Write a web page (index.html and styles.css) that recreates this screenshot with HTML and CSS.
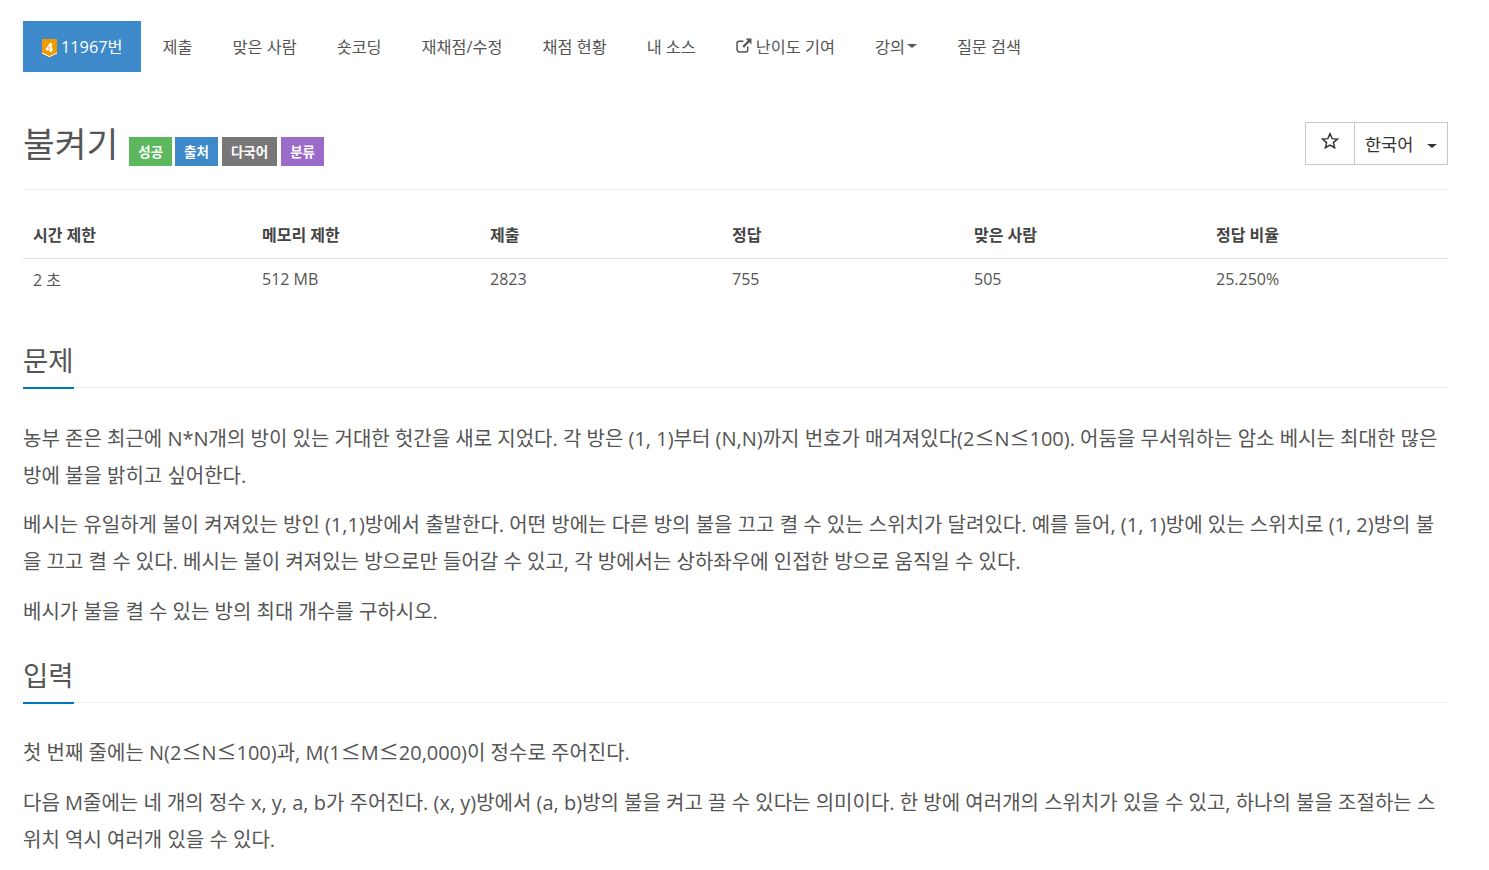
FILE: index.html
```html
<!DOCTYPE html>
<html lang="ko">
<head>
  <meta charset="UTF-8">
  <title>불켜기</title>
  <link rel="stylesheet" href="styles.css">
</head>
<body>

<div class="container">
  <ul class="tabs">
    <li class="active">
      <a href="#">
        <svg class="tier" width="15" height="20" viewBox="0 -1 15 20">
          <path d="M0 0h15v14.500l-7.500 4-7.500-4z" fill="#ec9a00"/>
          <path d="M0 14l7.500 3.500 7.500-3.500" fill="none" stroke="#fff" stroke-width="1"/>
          <text x="7.500" y="13" text-anchor="middle" class="tier-num">4</text>
        </svg>
        11967번
      </a>
    </li>
    <li><a href="#">제출</a></li>
    <li><a href="#">맞은 사람</a></li>
    <li><a href="#">숏코딩</a></li>
    <li><a href="#">재채점/수정</a></li>
    <li><a href="#">채점 현황</a></li>
    <li><a href="#">내 소스</a></li>
    <li>
      <a href="#">
        <svg class="ext" width="16" height="15" viewBox="0 0 15 14">
          <path d="M11 8v3a2 2 0 0 1-2 2H3a2 2 0 0 1-2-2V5a2 2 0 0 1 2-2h4" fill="none" stroke="#555" stroke-width="1.400"/>
          <path d="M9 0.500h5.500V6l-2-2-5 5-1.500-1.500 5-5z" fill="#555"/>
        </svg>
        난이도 기여
      </a>
    </li>
    <li><a href="#">강의<span class="caret"></span></a></li>
    <li><a href="#">질문 검색</a></li>
  </ul>

  <div class="page-header">
    <h1>불켜기</h1>
    <span class="label green">성공</span>
    <span class="label blue">출처</span>
    <span class="label gray">다국어</span>
    <span class="label purple">분류</span>
    <div class="btn-group">
      <button class="btn star">
        <svg width="18" height="18" viewBox="0 0 16 16">
          <path d="M8 1.500l1.900 4.400 4.700.4-3.600 3.100 1.100 4.600L8 11.600l-4.100 2.400 1.100-4.600L1.400 6.300l4.700-.4z" fill="none" stroke="#333" stroke-width="1.300"/>
        </svg>
      </button>
      <button class="btn lang">한국어<span class="caret dark"></span></button>
    </div>
  </div>

  <table class="info">
    <thead>
      <tr>
        <th class="col-time">시간 제한</th>
        <th class="col-mem">메모리 제한</th>
        <th class="col-sub">제출</th>
        <th class="col-sub">정답</th>
        <th class="col-sub">맞은 사람</th>
        <th>정답 비율</th>
      </tr>
    </thead>
    <tbody>
      <tr>
        <td>2 초</td>
        <td>512 MB</td>
        <td>2823</td>
        <td>755</td>
        <td>505</td>
        <td>25.250%</td>
      </tr>
    </tbody>
  </table>

  <section>
    <div class="headline"><h2>문제</h2></div>
    <p>농부 존은 최근에 N*N개의 방이 있는 거대한 헛간을 새로 지었다. 각 방은 (1, 1)부터 (N,N)까지 번호가 매겨져있다(2<span class="le">≤</span>N<span class="le">≤</span>100). 어둠을 무서워하는 암소 베시는 최대한 많은 방에 불을 밝히고 싶어한다.</p>
    <p>베시는 유일하게 불이 켜져있는 방인 (1,1)방에서 출발한다. 어떤 방에는 다른 방의 불을 끄고 켤 수 있는 스위치가 달려있다. 예를 들어, (1, 1)방에 있는 스위치로 (1, 2)방의 불을 끄고 켤 수 있다. 베시는 불이 켜져있는 방으로만 들어갈 수 있고, 각 방에서는 상하좌우에 인접한 방으로 움직일 수 있다.</p>
    <p>베시가 불을 켤 수 있는 방의 최대 개수를 구하시오.</p>
  </section>

  <section>
    <div class="headline"><h2>입력</h2></div>
    <p>첫 번째 줄에는 N(2<span class="le">≤</span>N<span class="le">≤</span>100)과, M(1<span class="le">≤</span>M<span class="le">≤</span>20,000)이 정수로 주어진다.</p>
    <p>다음 M줄에는 네 개의 정수 x, y, a, b가 주어진다. (x, y)방에서 (a, b)방의 불을 켜고 끌 수 있다는 의미이다. 한 방에 여러개의 스위치가 있을 수 있고, 하나의 불을 조절하는 스위치 역시 여러개 있을 수 있다.</p>
  </section>
</div>

</body>
</html>
```

FILE: styles.css
```css
html, body {
  margin: 0;
  padding: 0;
  height: 870px;
  overflow: hidden;
}
body {
  font-family: "Open Sans", "Noto Sans CJK KR", sans-serif;
  font-size: 16px;
  color: #555;
  background: #fff;
}
.container {
  width: 1425px;
  margin-left: 23px;
  padding-top: 21px;
}
.tabs {
  display: flex;
  list-style: none;
  margin: 0;
  padding: 0;
}
.tabs a {
  display: flex;
  align-items: center;
  box-sizing: border-box;
  height: 51px;
  padding: 0 20px 2px;
  color: #555;
  font-size: 16.300px;
  text-decoration: none;
}
.tabs li.active {
  margin-right: 2px;
}
.tabs li.active a {
  background: #3e89c9;
  color: #fff;
  padding: 0 18px 2px 19px;
}
.tier {
  margin: 5px 4px 0 0;
}
.tier-num {
  font-family: "Open Sans", sans-serif;
  font-size: 13px;
  font-weight: 700;
  fill: #fff;
}
.ext {
  margin-right: 4px;
}
.caret {
  display: inline-block;
  margin-left: 2px;
  border-top: 4px solid #555;
  border-left: 5px solid transparent;
  border-right: 5px solid transparent;
}
.page-header {
  display: flex;
  align-items: flex-end;
  margin-top: 50px;
  padding-bottom: 23px;
  border-bottom: 1px solid #eee;
  height: 44px;
}
.page-header h1 {
  margin: 0 11px 0 0;
  font-size: 34.500px;
  font-weight: 400;
  line-height: 45px;
}
.label {
  display: flex;
  align-items: center;
  justify-content: center;
  box-sizing: border-box;
  height: 29px;
  padding: 0 9px 2px;
  margin-right: 3px;
  color: #fff;
  font-size: 13.500px;
  font-weight: 600;
}
.green { background: #5cb85c; }
.blue { background: #3e89c9; margin-right: 4px; }
.gray { background: #777; margin-right: 4px; }
.purple { background: #9b6bca; }
.btn-group {
  display: flex;
  margin-left: auto;
  align-self: flex-start;
}
.btn {
  height: 43px;
  background: #fff;
  border: 1px solid #c8c8c8;
  font-family: inherit;
  font-size: 17.500px;
  color: #333;
  padding: 0;
}
.star {
  width: 50px;
  padding-bottom: 2px;
}
.lang {
  width: 94px;
  margin-left: -1px;
  text-align: left;
  padding-left: 10px;
}
.caret.dark {
  border-top-color: #333;
  margin-left: 14px;
  vertical-align: middle;
}
.info {
  width: 100%;
  margin-top: 23px;
  border-collapse: collapse;
  table-layout: fixed;
}
.info th {
  text-align: left;
  font-size: 16px;
  font-weight: 700;
  color: #444;
  height: 45px;
  padding: 0 10px 2px;
  border-bottom: 1px solid #ddd;
  box-sizing: border-box;
}
.info td {
  font-size: 16px;
  height: 42px;
  padding: 0 10px 1px;
  box-sizing: border-box;
}
.col-time { width: 229px; }
.col-mem { width: 228px; }
.col-sub { width: 242px; }
.headline {
  border-bottom: 1px solid #eee;
  margin-top: 43px;
  margin-bottom: 30.500px;
}
section + section .headline {
  margin-top: 28.500px;
  margin-bottom: 30px;
}
.headline h2 {
  display: inline-block;
  margin: 0 0 -2px;
  padding-bottom: 8px;
  font-size: 27.500px;
  font-weight: 400;
  line-height: 36px;
  border-bottom: 2px solid #0076c0;
}
section p {
  margin: 0 0 12.500px;
  font-size: 20px;
  line-height: 37px;
}
.le {
  font-family: "Noto Sans CJK KR", sans-serif;
}
```
